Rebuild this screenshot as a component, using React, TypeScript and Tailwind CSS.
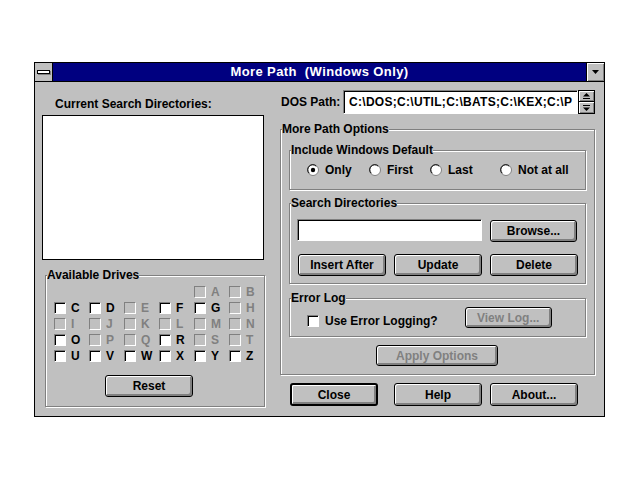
import React from 'react';

const enabledDrives = ['C', 'D', 'F', 'G', 'O', 'R', 'U', 'V', 'W', 'X', 'Y', 'Z'];

const driveRows: (string | null)[][] = [
  [null, null, null, null, 'A', 'B'],
  ['C', 'D', 'E', 'F', 'G', 'H'],
  ['I', 'J', 'K', 'L', 'M', 'N'],
  ['O', 'P', 'Q', 'R', 'S', 'T'],
  ['U', 'V', 'W', 'X', 'Y', 'Z'],
];

const Btn: React.FC<{ className?: string; disabled?: boolean; def?: boolean; children: React.ReactNode }> = ({
  className = '',
  disabled = false,
  def = false,
  children,
}) => (
  <div
    className={`flex items-center justify-center bg-[#c0c0c0] rounded-[3px] border-black shadow-[inset_1px_1px_0_#fff,inset_-2px_-2px_0_#808080] ${def ? 'border-2' : 'border'} ${disabled ? 'text-[#808080]' : 'text-black'} ${className}`}
  >
    {children}
  </div>
);

const Check: React.FC<{ disabled?: boolean }> = ({ disabled = false }) => (
  <div
    className={
      disabled
        ? 'w-[12px] h-[12px] shrink-0 border border-t-[#808080] border-l-[#808080] border-r-white border-b-white bg-[#c0c0c0]'
        : 'w-[12px] h-[12px] shrink-0 border border-t-[#808080] border-l-[#808080] border-r-white border-b-white bg-white shadow-[inset_1px_1px_0_#000]'
    }
  />
);

const Radio: React.FC<{ checked?: boolean; label: string; className?: string }> = ({ checked = false, label, className = '' }) => (
  <div className={`flex items-center ${className}`}>
    <svg width="12" height="12" viewBox="0 0 12 12" className="shrink-0">
      <circle cx="6" cy="6" r="5.5" fill="#fff" stroke="#808080" />
      <path d="M2.2 9.2 A4.5 4.5 0 0 1 9.2 2.2" fill="none" stroke="#000" />
      {checked && <circle cx="6" cy="6" r="2.2" fill="#000" />}
    </svg>
    <span className="ml-[6px]">{label}</span>
  </div>
);

const Group: React.FC<{ label: string; className?: string; children?: React.ReactNode }> = ({ label, className = '', children }) => (
  <fieldset className={`border border-[#808080] shadow-[1px_1px_0_#fff,inset_1px_1px_0_#fff] ${className}`}>
    <legend className="ml-[1px] px-0 bg-[#c0c0c0] leading-[14px]">{label}</legend>
    {children}
  </fieldset>
);

export default function App() {
  return (
    <div className="w-[640px] h-[480px] bg-white pt-[62px] pl-[34px] font-['Liberation_Sans',Arial,sans-serif] text-[12px] font-bold leading-[14px] text-black">
      <div className="w-[571px] h-[355px] border border-black bg-[#c0c0c0] flex flex-col">
        {/* title bar */}
        <div className="h-[19px] flex border-b border-black shrink-0">
          <div className="w-[18px] border-r border-black flex items-center justify-center">
            <div className="w-[13px] h-[4px] bg-white border border-black shadow-[1px_1px_0_#808080]" />
          </div>
          <div className="flex-1 bg-[#000080] text-white text-[13px] tracking-[0.4px] flex items-center justify-center whitespace-pre">
            More Path  (Windows Only)
          </div>
          <div className="w-[18px] border-l border-black flex items-center justify-center shadow-[inset_1px_1px_0_#fff,inset_-1px_-1px_0_#808080]">
            <svg width="7" height="4" viewBox="0 0 7 4">
              <path d="M0 0h7L3.5 4z" fill="#000" />
            </svg>
          </div>
        </div>

        <div className="flex flex-1 pl-[7px]">
          {/* left column */}
          <div className="w-[222px] pt-[15px] flex flex-col">
            <div className="pl-[13px] h-[14px]">Current Search Directories:</div>
            <div className="mt-[4px] h-[145px] bg-white border border-black" />
            <Group label="Available Drives" className="mt-[8px] ml-[3px] w-[218px] h-[139px]">
              <div className="pl-[8px] pt-[2px]">
                {driveRows.map((row, i) => (
                  <div key={i} className="flex h-[16px] items-center">
                    {row.map((d, j) =>
                      d ? (
                        <div key={j} className="w-[35px] flex items-center">
                          <Check disabled={!enabledDrives.includes(d)} />
                          <span className={`ml-[5px] ${enabledDrives.includes(d) ? 'text-black' : 'text-[#808080]'}`}>{d}</span>
                        </div>
                      ) : (
                        <div key={j} className="w-[35px]" />
                      )
                    )}
                  </div>
                ))}
                <Btn className="mt-[11px] ml-[51px] w-[88px] h-[22px]">Reset</Btn>
              </div>
            </Group>
          </div>

          {/* right column */}
          <div className="ml-[16px] w-[315px] pt-[8px] flex flex-col">
            <div className="flex h-[24px]">
              <div className="w-[63px] pl-[1px] flex items-center">DOS Path:</div>
              <div className="w-[235px] h-[24px] bg-white border border-t-[#808080] border-l-[#808080] border-b-white border-r-white shadow-[inset_1px_1px_0_#000] flex items-center pl-[5px] overflow-hidden whitespace-nowrap tracking-[0.3px]">
                C:\DOS;C:\UTIL;C:\BATS;C:\KEX;C:\P
              </div>
              <div className="w-[17px] flex flex-col">
                <div className="h-[12px] border border-black bg-[#c0c0c0] shadow-[inset_1px_1px_0_#fff,inset_-1px_-1px_0_#808080] flex items-center justify-center">
                  <svg width="7" height="6" viewBox="0 0 7 6">
                    <path d="M3.5 0L7 3.5H0z" fill="#000" />
                    <rect x="0" y="5" width="7" height="1" fill="#000" />
                  </svg>
                </div>
                <div className="h-[12px] border border-t-0 border-black bg-[#c0c0c0] shadow-[inset_1px_1px_0_#fff,inset_-1px_-1px_0_#808080] flex items-center justify-center">
                  <svg width="7" height="6" viewBox="0 0 7 6">
                    <rect x="0" y="0" width="7" height="1" fill="#000" />
                    <path d="M0 2.5H7L3.5 6z" fill="#000" />
                  </svg>
                </div>
              </div>
            </div>

            <Group label="More Path Options" className="mt-[8px] w-[315px] h-[253px]">
              <div className="px-[8px] flex flex-col">
                <Group label="Include Windows Default" className="mt-[7px] h-[47px]">
                  <div className="flex mt-[6px] pl-[17px]">
                    <Radio checked label="Only" className="w-[62px]" />
                    <Radio label="First" className="w-[61px]" />
                    <Radio label="Last" className="w-[70px]" />
                    <Radio label="Not at all" />
                  </div>
                </Group>

                <Group label="Search Directories" className="mt-[6px] h-[88px]">
                  <div className="pl-[7px] pt-[9px]">
                    <div className="flex">
                      <div className="w-[185px] h-[22px] bg-white border border-t-[#808080] border-l-[#808080] border-b-white border-r-white shadow-[inset_1px_1px_0_#000]" />
                      <Btn className="ml-[8px] mt-[1px] w-[87px] h-[22px]">Browse...</Btn>
                    </div>
                    <div className="flex mt-[12px] ml-[1px] gap-[8px]">
                      <Btn className="w-[88px] h-[22px]">Insert After</Btn>
                      <Btn className="w-[88px] h-[22px]">Update</Btn>
                      <Btn className="w-[88px] h-[22px]">Delete</Btn>
                    </div>
                  </div>
                </Group>

                <Group label="Error Log" className="mt-[7px] h-[46px]">
                  <div className="flex pl-[17px] pt-[2px]">
                    <div className="flex items-center mt-[7px] h-[14px]">
                      <Check />
                      <span className="ml-[6px]">Use Error Logging?</span>
                    </div>
                    <Btn disabled className="ml-[27px] w-[87px] h-[21px]">View Log...</Btn>
                  </div>
                </Group>

                <Btn disabled className="mt-[8px] ml-[87px] w-[122px] h-[21px]">Apply Options</Btn>
              </div>
            </Group>

            <div className="flex mt-[8px]">
              <Btn def className="ml-[10px] w-[88px] h-[23px]">Close</Btn>
              <Btn className="ml-[16px] w-[88px] h-[23px]">Help</Btn>
              <Btn className="ml-[8px] w-[88px] h-[23px]">About...</Btn>
            </div>
          </div>
        </div>
      </div>
    </div>
  );
}
